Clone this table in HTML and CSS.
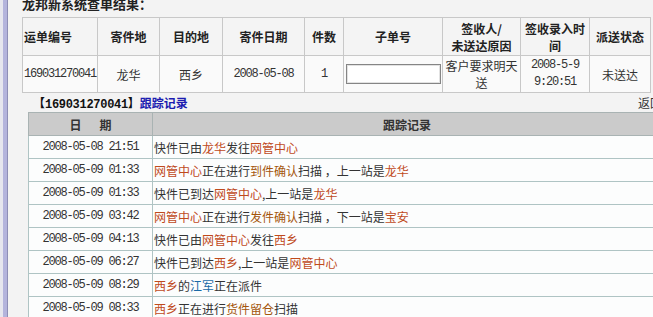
FILE: index.html
```html
<!DOCTYPE html>
<html lang="zh-CN">
<head>
<meta charset="utf-8">
<title>龙邦新系统查单结果</title>
<link rel="stylesheet" href="styles.css">
</head>
<body>
<div class="frame">
  <div class="rail"></div>
  <main class="content">
    <h1 class="title">龙邦新系统查单结果：</h1>
    <table class="result">
      <colgroup>
        <col class="c1"><col class="c2"><col class="c3"><col class="c4"><col class="c5"><col class="c6"><col class="c7"><col class="c8"><col class="c9">
      </colgroup>
      <thead>
        <tr>
          <th class="left">运单编号</th>
          <th>寄件地</th>
          <th>目的地</th>
          <th>寄件日期</th>
          <th>件数</th>
          <th>子单号</th>
          <th>签收人/<br>未送达原因</th>
          <th>签收录入时间</th>
          <th>派送状态</th>
        </tr>
      </thead>
      <tbody>
        <tr>
          <td class="left mono">169031270041</td>
          <td>龙华</td>
          <td>西乡</td>
          <td class="mono">2008-05-08</td>
          <td class="mono">1</td>
          <td><input class="sub" type="text" aria-label="子单号"></td>
          <td>客户要求明天送</td>
          <td class="mono">2008-5-9<br>9:20:51</td>
          <td>未送达</td>
        </tr>
      </tbody>
    </table>
    <div class="track-bar">
      <span class="track-id">【<span class="mono-b">169031270041</span>】<a class="track-link">跟踪记录</a></span>
      <a class="back">返回</a>
    </div>
    <table class="track">
      <colgroup><col class="t1"><col class="t2"></colgroup>
      <thead>
        <tr><th>日&emsp;&ensp;期</th><th>跟踪记录</th></tr>
      </thead>
      <tbody>
        <tr><td class="mono">2008-05-08 21:51</td><td class="msg">快件已由<span class="pl">龙华</span>发往<span class="pl">网管中心</span></td></tr>
        <tr><td class="mono">2008-05-09 01:33</td><td class="msg"><span class="pl">网管中心</span>正在进行<span class="act">到件确认</span>扫描 ，上一站是<span class="pl">龙华</span></td></tr>
        <tr><td class="mono">2008-05-09 01:33</td><td class="msg">快件已到达<span class="pl">网管中心</span>,上一站是<span class="pl">龙华</span></td></tr>
        <tr><td class="mono">2008-05-09 03:42</td><td class="msg"><span class="pl">网管中心</span>正在进行<span class="act">发件确认</span>扫描 ，下一站是<span class="pl">宝安</span></td></tr>
        <tr><td class="mono">2008-05-09 04:13</td><td class="msg">快件已由<span class="pl">网管中心</span>发往<span class="pl">西乡</span></td></tr>
        <tr><td class="mono">2008-05-09 06:27</td><td class="msg">快件已到达<span class="pl">西乡</span>,上一站是<span class="pl">网管中心</span></td></tr>
        <tr><td class="mono">2008-05-09 08:29</td><td class="msg"><span class="pl">西乡</span>的<span class="who">江军</span>正在派件</td></tr>
        <tr><td class="mono">2008-05-09 08:33</td><td class="msg"><span class="pl">西乡</span>正在进行<span class="act">货件留仓</span>扫描</td></tr>
      </tbody>
    </table>
  </main>
</div>
</body>
</html>
```
FILE: styles.css
```css
html, body {
  margin: 0;
  padding: 0;
}
body {
  background: #f3f3f3;
  color: #333;
  font-family: "Noto Sans CJK SC", "Noto Sans", sans-serif;
  font-size: 12px;
  overflow: hidden;
}
.frame {
  display: flex;
  height: 317px;
}
.rail {
  flex: none;
  width: 8px;
  background: linear-gradient(to right, #e6e6ee 0 3px, #b4b4dc 3px 7px, #8e8eb6 7px 8px);
}
.content {
  flex: none;
  width: 640px;
  padding-left: 14px;
}
.title {
  margin: -4px 0 5px;
  font-size: 13px;
  line-height: 16px;
  font-weight: bold;
  color: #222;
}
.mono {
  font-family: "Liberation Mono", monospace;
  font-size: 12px;
  letter-spacing: -1.2px;
}
.mono-b {
  font-family: "Liberation Mono", monospace;
  font-size: 12px;
  letter-spacing: -0.3px;
  font-weight: bold;
}

/* result table */
.result {
  border-collapse: collapse;
  table-layout: fixed;
  width: 629px;
  background: #f7f7f7;
}
.result .c1 { width: 75px; }
.result .c2 { width: 62px; }
.result .c3 { width: 63px; }
.result .c4 { width: 82px; }
.result .c5 { width: 39px; }
.result .c6 { width: 99px; }
.result .c7 { width: 78px; }
.result .c8 { width: 69px; }
.result .c9 { width: 61px; }
.result th,
.result td {
  border: 1px solid #c8c8c8;
  padding: 0 1px;
  text-align: center;
  vertical-align: middle;
  line-height: 17px;
}
.result th {
  height: 37px;
  font-weight: bold;
  color: #222;
  background: #f4f4f4;
}
.result td {
  height: 36px;
  background: #fafafa;
}
.result .left {
  text-align: left;
}
.sub {
  display: block;
  box-sizing: border-box;
  width: 95px;
  height: 20px;
  margin: 0 auto;
  padding: 0;
  border: 1px solid #858585;
  box-shadow: inset 0 0 0 1px #e2e2e2;
  background: #fff;
}

/* track header line */
.track-bar {
  display: flex;
  justify-content: space-between;
  height: 19px;
  line-height: 19px;
  padding-left: 11px;
}
.track-id {
  font-weight: bold;
  color: #111;
}
.track-link {
  color: #1c1cb0;
}
.back {
  color: #333;
}

/* track table */
.track {
  border-collapse: collapse;
  table-layout: fixed;
  width: 634px;
  margin-left: 6px;
  background: #fcfdfd;
}
.track .t1 { width: 124px; }
.track th,
.track td {
  border: 1px solid #afc4c4;
  padding: 0 1px;
  height: 22px;
  vertical-align: middle;
}
.track th {
  background: #cbcbcb;
  font-weight: bold;
  color: #333;
  border-color: #a9b3b3;
}
.track td {
  text-align: center;
}
.track td.msg {
  text-align: left;
  color: #333;
}
.pl { color: #bf4a1c; }
.act { color: #a4560c; }
.who { color: #1a6aa6; }
```
